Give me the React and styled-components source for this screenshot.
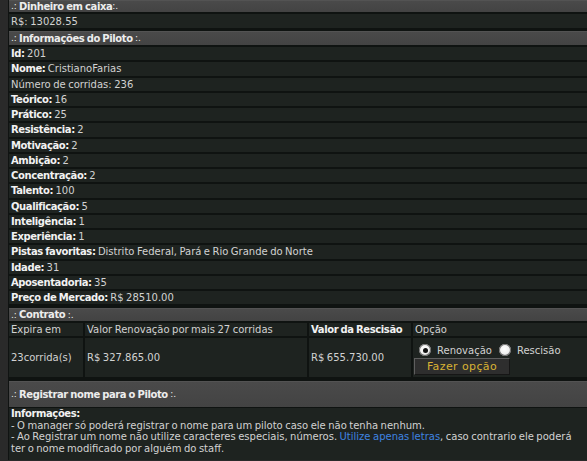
import styled, { createGlobalStyle } from "styled-components";

const GlobalStyle = createGlobalStyle`
  *, *::before, *::after {
    box-sizing: border-box;
  }
  html, body {
    margin: 0;
    padding: 0;
    background: #2a2a2a;
  }
  body {
    padding-left: 8px;
    overflow: hidden;
    font-family: "DejaVu Sans", Verdana, sans-serif;
    font-size: 10px;
    word-spacing: -0.7px;
    color: #d2d2d2;
  }
`;

const Page = styled.div`
  width: 579px;
  display: flex;
  flex-direction: column;
  background: #0f1311;
  border-left: 1px solid #101312;
`;

const Block = styled.section`
  display: flex;
  flex-direction: column;
  gap: ${(p) => p.$gap || 2}px;
  padding-bottom: ${(p) => p.$space || 0}px;
`;

const Header = styled.div`
  display: flex;
  align-items: center;
  height: ${(p) => p.$h || 13}px;
  padding-left: 2px;
  background: linear-gradient(#5c5c5c 0, #4a4a4a 1px, #434343 100%);
  color: #ededed;
  font-weight: bold;
  font-size: 10px;
  letter-spacing: -0.4px;
  white-space: pre;

  span {
    font-weight: normal;
    font-size: 9px;
    letter-spacing: 0;
  }
`;

const Row = styled.div`
  display: flex;
  align-items: center;
  height: ${(p) => p.$h || 13.25}px;
  padding-left: 2px;
  background: #1e2320;
  white-space: pre;
`;

const Label = styled.b`
  color: #f2f2f2;
  letter-spacing: -0.4px;
`;

const Contract = styled.div`
  display: grid;
  grid-template-columns: 74px 222px 102px 1fr;
  gap: 2px;
`;

const Cell = styled.div`
  display: flex;
  align-items: center;
  height: ${(p) => p.$h || 13}px;
  padding-left: 2px;
  background: #1e2320;
  font-weight: ${(p) => (p.$bold ? "bold" : "normal")};
  color: ${(p) => (p.$bold ? "#f2f2f2" : "#d2d2d2")};
  letter-spacing: ${(p) => (p.$bold ? "-0.4px" : "0")};
  white-space: nowrap;
`;

const OptionCell = styled(Cell)`
  flex-direction: column;
  align-items: flex-start;
  justify-content: flex-start;
  padding-top: 6px;
  padding-left: 1px;
  gap: 2px;
`;

const Radios = styled.div`
  display: flex;
  align-items: center;
  gap: 7px;
  padding-left: 5px;
  height: 12px;
`;

const RadioLabel = styled.label`
  display: flex;
  align-items: center;
  gap: 6px;
`;

const Radio = styled.span`
  width: 12px;
  height: 12px;
  border-radius: 50%;
  background: radial-gradient(circle at 45% 40%, #fff 0, #f0f0f0 50%, #9a9a9a 100%);
  box-shadow: inset 0 0 0 1px #6a6a6a;
  display: flex;
  align-items: center;
  justify-content: center;

  &::after {
    content: "";
    width: 5px;
    height: 5px;
    border-radius: 50%;
    background: ${(p) => (p.$checked ? "#111" : "transparent")};
  }
`;

const Button = styled.button`
  width: 96px;
  height: 17px;
  background: #2e2e2e;
  border: 1px solid #161616;
  border-top-color: #5e5e5e;
  border-left-color: #5e5e5e;
  color: #d9b234;
  font-family: "DejaVu Sans", Verdana, sans-serif;
  font-size: 11px;
  letter-spacing: 0.4px;
  word-spacing: 0;
  padding: 0;
`;

const Info = styled.div`
  height: 52px;
  padding: 0 2px;
  background: #1e2320;
  line-height: 11.5px;
  white-space: nowrap;
`;

const Link = styled.span`
  color: #3f83e0;
`;

const pilot = [
  ["Id: ", "201"],
  ["Nome: ", "CristianoFarias"],
  [null, "Número de corridas: 236"],
  ["Teórico: ", "16"],
  ["Prático: ", "25"],
  ["Resistência: ", "2"],
  ["Motivação: ", "2"],
  ["Ambição: ", "2"],
  ["Concentração: ", "2"],
  ["Talento: ", "100"],
  ["Qualificação: ", "5"],
  ["Inteligência: ", "1"],
  ["Experiência: ", "1"],
  ["Pistas favoritas: ", "Distrito Federal, Pará e Rio Grande do Norte"],
  ["Idade: ", "31"],
  ["Aposentadoria: ", "35"],
  ["Preço de Mercado: ", "R$ 28510.00"],
];

export default function App() {
  return (
    <>
      <GlobalStyle />
      <Page>
        <Block $space={3}>
          <Header $h={12}>
            <span>.: </span>Dinheiro em caixa<span>:.</span>
          </Header>
          <Row $h={14}>R$: 13028.55</Row>
        </Block>

        <Block $space={4}>
          <Header $h={14}>
            <span>.: </span>Informações do Piloto <span>:.</span>
          </Header>
          {pilot.map(([label, value]) => (
            <Row key={value}>
              {label && <Label>{label}</Label>}
              {value}
            </Row>
          ))}
        </Block>

        <Block $space={4}>
          <Header>
            <span>.: </span>Contrato <span>:.</span>
          </Header>
          <Contract>
            <Cell>Expira em</Cell>
            <Cell>Valor Renovação por mais 27 corridas</Cell>
            <Cell $bold>Valor da Rescisão</Cell>
            <Cell>Opção</Cell>
            <Cell $h={39}>23corrida(s)</Cell>
            <Cell $h={39}>R$ 327.865.00</Cell>
            <Cell $h={39}>R$ 655.730.00</Cell>
            <OptionCell $h={39}>
              <Radios>
                <RadioLabel>
                  <Radio $checked />
                  Renovação
                </RadioLabel>
                <RadioLabel>
                  <Radio />
                  Rescisão
                </RadioLabel>
              </Radios>
              <Button>Fazer opção</Button>
            </OptionCell>
          </Contract>
        </Block>

        <Block $gap={1}>
          <Header $h={26}>
            <span>.: </span>Registrar nome para o Piloto <span>:.</span>
          </Header>
          <Info>
            <Label>Informações:</Label>
            <br />- O manager só poderá registrar o nome para um piloto caso ele não tenha nenhum.
            <br />- Ao Registrar um nome não utilize caracteres especiais, números.{" "}
            <Link>Utilize apenas letras</Link>, caso contrario ele poderá
            <br />ter o nome modificado por alguém do staff.
          </Info>
        </Block>
      </Page>
    </>
  );
}
